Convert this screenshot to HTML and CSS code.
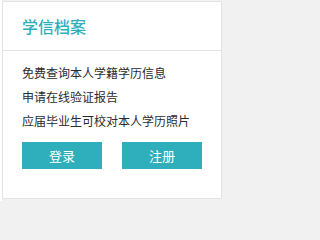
FILE: index.html
```html
<!DOCTYPE html>
<html lang="zh-CN">
<head>
<meta charset="utf-8">
<title>学信档案</title>
<link rel="stylesheet" href="styles.css">
</head>
<body>
<div class="page">
  <div class="card">
    <div class="card-head">
      <h2 class="card-title">学信档案</h2>
    </div>
    <div class="card-body">
      <ul class="links">
        <li>免费查询本人学籍学历信息</li>
        <li>申请在线验证报告</li>
        <li>应届毕业生可校对本人学历照片</li>
      </ul>
      <div class="actions">
        <a class="btn" href="#">登录</a>
        <a class="btn" href="#">注册</a>
      </div>
    </div>
  </div>
</div>
</body>
</html>
```
FILE: styles.css
```css
html, body {
  margin: 0;
  padding: 0;
  background: #f1f1f1;
}
body {
  font-family: "Noto Sans CJK SC", "Liberation Sans", sans-serif;
  color: #333333;
}
.page {
  padding: 1px 0 2px 0;
  border-left: 2px solid #ffffff;
}
.card {
  box-sizing: border-box;
  width: 220px;
  height: 198px;
  border: 1px solid #e3e3e3;
  background: #ffffff;
}
.card-head {
  height: 48px;
  border-bottom: 1px solid #e3e3e3;
  padding-left: 19px;
}
.card-title {
  margin: 0;
  font-size: 16px;
  font-weight: 500;
  line-height: 48px;
  color: #2fafbb;
}
.card-body {
  padding: 10px 0 0 19px;
}
.links {
  list-style: none;
  margin: 0;
  padding: 0;
}
.links li {
  font-size: 12px;
  line-height: 24px;
  color: #2b2b2b;
}
.actions {
  display: flex;
  gap: 20px;
  margin-top: 9px;
}
.btn {
  display: block;
  width: 80px;
  height: 27px;
  line-height: 27px;
  text-align: center;
  background: #2fafbb;
  color: #ffffff;
  font-size: 13px;
  text-decoration: none;
}
```
